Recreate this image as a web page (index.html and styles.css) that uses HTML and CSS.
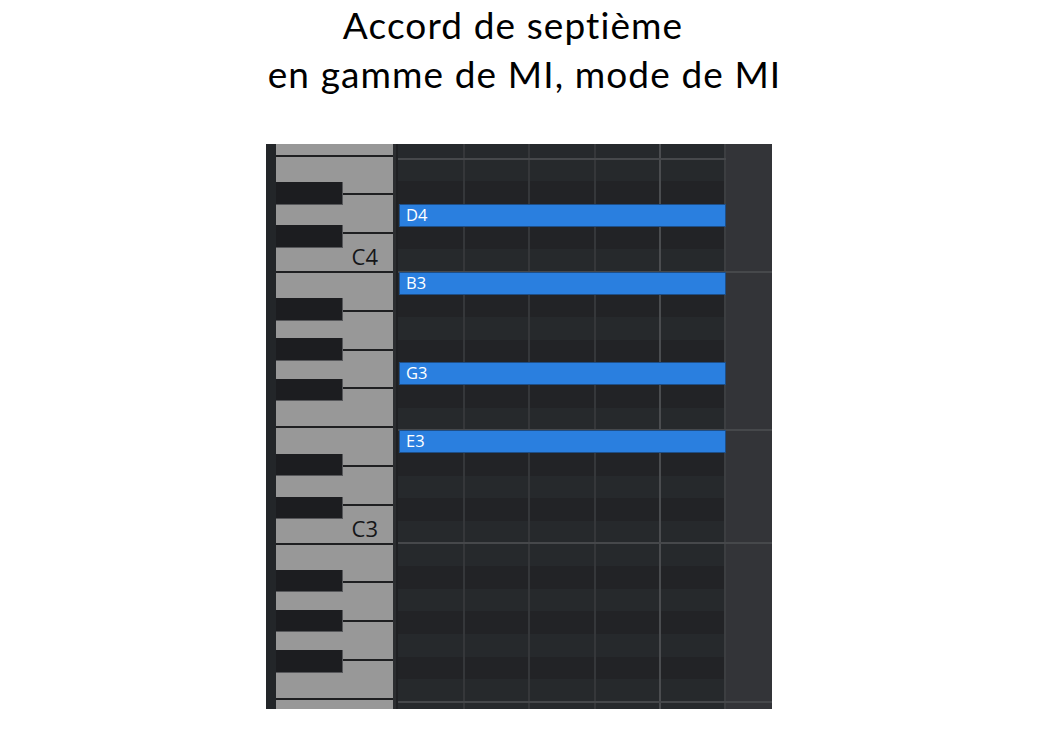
FILE: index.html
```html
<!DOCTYPE html>
<html lang="fr">
<head>
<meta charset="utf-8">
<title>Accord de septième</title>
<link rel="stylesheet" href="styles.css">
</head>
<body>
<header class="title">
  <div class="t1">Accord de septième</div>
  <div class="t2">en gamme de MI, mode de MI</div>
</header>
<main class="roll">
  <div class="strip"></div>
  <div class="keys">
    <div class="keys-inner">
      <div class="octave">
        <div class="wk"></div><div class="wk"></div><div class="wk"></div><div class="wk"></div>
        <div class="wk"></div><div class="wk"></div><div class="wk"><span class="klabel">C4</span></div>
        <div class="bk as"></div><div class="bk gs"></div><div class="bk fs"></div><div class="bk ds"></div><div class="bk cs"></div>
      </div>
      <div class="octave">
        <div class="wk"></div><div class="wk"></div><div class="wk"></div><div class="wk"></div>
        <div class="wk"></div><div class="wk"></div><div class="wk"><span class="klabel">C3</span></div>
        <div class="bk as"></div><div class="bk gs"></div><div class="bk fs"></div><div class="bk ds"></div><div class="bk cs"></div>
      </div>
      <div class="octave">
        <div class="wk"></div><div class="wk"></div><div class="wk"></div><div class="wk"></div>
        <div class="wk"></div><div class="wk"></div><div class="wk"></div>
        <div class="bk as"></div><div class="bk gs"></div><div class="bk fs"></div><div class="bk ds"></div><div class="bk cs"></div>
      </div>
    </div>
  </div>
  <div class="divider"></div>
  <div class="lanes">
    <div class="lanes-inner">
      <!-- octave 4 -->
      <div class="row w"><div class="cell"></div><div class="side"></div></div>
      <div class="row b"><div class="cell"></div><div class="side"></div></div>
      <div class="row w"><div class="cell"></div><div class="side"></div></div>
      <div class="row b"><div class="cell"></div><div class="side"></div></div>
      <div class="row w"><div class="cell"></div><div class="side"></div></div>
      <div class="row b"><div class="cell"></div><div class="side"></div></div>
      <div class="row w"><div class="cell"></div><div class="side"></div></div>
      <div class="row w ef ef-top"><div class="cell"></div><div class="side"></div></div>
      <div class="row b"><div class="cell"></div><div class="side"></div></div>
      <div class="row w"><div class="cell"><div class="note">D4</div></div><div class="side"></div></div>
      <div class="row b"><div class="cell"></div><div class="side"></div></div>
      <div class="row w oct"><div class="cell"></div><div class="side"></div></div>
      <!-- octave 3 -->
      <div class="row w"><div class="cell"><div class="note">B3</div></div><div class="side"></div></div>
      <div class="row b"><div class="cell"></div><div class="side"></div></div>
      <div class="row w"><div class="cell"></div><div class="side"></div></div>
      <div class="row b"><div class="cell"></div><div class="side"></div></div>
      <div class="row w"><div class="cell"><div class="note">G3</div></div><div class="side"></div></div>
      <div class="row b"><div class="cell"></div><div class="side"></div></div>
      <div class="row w"><div class="cell"></div><div class="side"></div></div>
      <div class="row w ef"><div class="cell"><div class="note">E3</div></div><div class="side"></div></div>
      <div class="row b"><div class="cell"></div><div class="side"></div></div>
      <div class="row w"><div class="cell"></div><div class="side"></div></div>
      <div class="row b"><div class="cell"></div><div class="side"></div></div>
      <div class="row w oct"><div class="cell"></div><div class="side"></div></div>
      <!-- octave 2 -->
      <div class="row w"><div class="cell"></div><div class="side"></div></div>
      <div class="row b"><div class="cell"></div><div class="side"></div></div>
      <div class="row w"><div class="cell"></div><div class="side"></div></div>
      <div class="row b"><div class="cell"></div><div class="side"></div></div>
      <div class="row w"><div class="cell"></div><div class="side"></div></div>
      <div class="row b"><div class="cell"></div><div class="side"></div></div>
      <div class="row w"><div class="cell"></div><div class="side"></div></div>
      <div class="row w ef"><div class="cell"></div><div class="side"></div></div>
      <div class="row b"><div class="cell"></div><div class="side"></div></div>
      <div class="row w"><div class="cell"></div><div class="side"></div></div>
      <div class="row b"><div class="cell"></div><div class="side"></div></div>
      <div class="row w oct"><div class="cell"></div><div class="side"></div></div>
    </div>
  </div>
</main>
</body>
</html>
```

FILE: styles.css
```css
* { box-sizing: border-box; }
html, body { margin: 0; padding: 0; background: #ffffff; }

.title {
  font-family: Lato, "Open Sans", sans-serif;
  font-size: 37px;
  line-height: 49px;
  letter-spacing: 1.1px;
  font-variant-ligatures: none;
  color: #000;
  text-align: center;
}
.t1 { padding-right: 38px; }
.t2 { padding-right: 15px; }

.roll {
  margin: 46px 0 0 266px;
  width: 506px;
  height: 565px;
  display: flex;
  overflow: hidden;
}

.strip { width: 10px; flex: none; background: #232629; }

.keys { width: 117px; flex: none; overflow: hidden; background: #989898; }
.keys-inner { margin-top: -142.6px; }
.octave { position: relative; height: 271.6px; }
.wk {
  height: 38.8px;
  background: #989898;
  border-bottom: 2px solid #1e1f21;
  display: flex;
  align-items: flex-end;
  justify-content: flex-end;
}
.klabel {
  font-family: "Open Sans", "Noto Sans", sans-serif;
  font-size: 22px;
  line-height: 26px;
  color: #151618;
  padding: 0 15px 2px 0;
}
.bk {
  position: absolute;
  left: 0;
  width: 67px;
  height: 22.5px;
  background: #1c1d20;
  border-right: 1px solid #56575a;
  border-bottom: 1px solid #56575a;
}
.as { top: 25px; }
.gs { top: 65px; }
.fs { top: 105.6px; }
.ds { top: 180.6px; }
.cs { top: 223.6px; }

.divider {
  width: 5px;
  flex: none;
  background: #2b2d30;
  border-right: 2px solid #1f2023;
}

.lanes { width: 374px; flex: none; overflow: hidden; }
.lanes-inner { margin-top: -143.6px; }
.row {
  position: relative;
  display: flex;
  height: 22.633px;
}
.row.w { --row: #26292c; }
.row.b { --row: #222326; }
.cell {
  width: 328px;
  flex: none;
  background:
    linear-gradient(90deg,
      transparent 65px, #35373a 65px 67px,
      transparent 67px 130px, #35373a 130px 132px,
      transparent 132px 196px, #35373a 196px 198px,
      transparent 198px 261px, #4a4c4f 261px 263px,
      transparent 263px 326px, #3c3e41 326px 328px),
    var(--row);
}
.side { flex: 1; background: #333438; }

.row.ef::before,
.row.oct::after {
  content: "";
  position: absolute;
  left: 0;
  right: 0;
  height: 2px;
  background: #46484b;
  z-index: 1;
}
.row.ef::before { top: -1px; }
.row.ef-top::before { right: 46px; }
.row.oct::after { bottom: -1px; }

.note {
  position: relative;
  z-index: 2;
  height: 100%;
  margin-left: 1px;
  width: 327px;
  background: #2a7fdf;
  border: 1px solid #1e4e86;
  color: #ffffff;
  font-family: "Open Sans", "Noto Sans", sans-serif;
  font-size: 16.5px;
  line-height: 20px;
  padding-left: 6px;
}
```
